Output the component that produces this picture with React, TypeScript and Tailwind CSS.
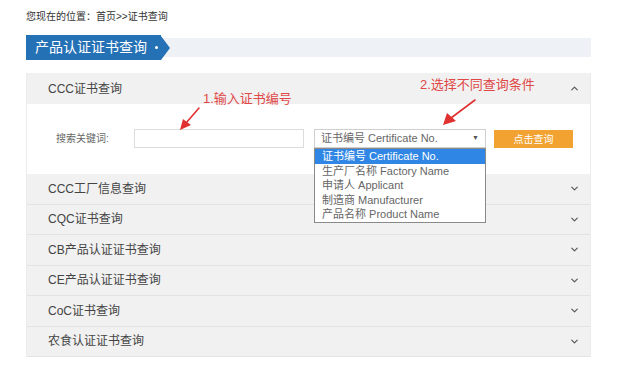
import { ChevronDown, ChevronUp } from 'lucide-react'

const rows = ['CCC工厂信息查询', 'CQC证书查询', 'CB产品认证证书查询', 'CE产品认证证书查询', 'CoC证书查询', '农食认证证书查询']

const options = ['生产厂名称 Factory Name', '申请人 Applicant', '制造商 Manufacturer', '产品名称 Product Name']

export default function App() {
  return (
    <div
      className="relative w-[639px] h-[372px] overflow-hidden bg-white"
      style={{ fontFamily: "'Liberation Sans', 'Noto Sans CJK SC', sans-serif" }}
    >
      {/* breadcrumb */}
      <div className="pl-[26px] pt-[10px] h-[35px] text-[10px] leading-[14px] text-[#333]">
        您现在的位置：首页&gt;&gt;证书查询
      </div>

      {/* title tab */}
      <div className="ml-[26px] w-[565px] h-[25px] flex items-center">
        <div className="relative z-10 h-[25px] w-[135px] bg-[#2571b5] flex items-center pl-[9px] text-[14px] text-white">
          产品认证证书查询
          <span className="absolute left-[129px] top-[11px] w-[3px] h-[3px] rounded-full bg-white" />
        </div>
        <div className="relative z-10 h-0 w-0 border-y-[12.5px] border-y-transparent border-l-[9px] border-l-[#2571b5]" />
        <div className="flex-1 h-[19px] -ml-[9px] bg-[#eef2f7]" />
      </div>

      {/* panel */}
      <div className="ml-[26px] mt-[13px] w-[565px] border-x border-[#ececec]">
        <div className="h-[31px] bg-[#f1f1f1] flex items-center justify-between pl-[21px] pr-[10px] text-[12px] text-[#444]">
          <span>CCC证书查询</span>
          <ChevronUp className="w-[11px] h-[11px] text-[#555]" strokeWidth={2.5} />
        </div>

        <div className="h-[70px] bg-white flex items-start pt-[25px] pl-[29px] text-[10px]">
          <span className="w-[78px] leading-[19px] text-[#666] text-[10px]">搜索关键词:</span>
          <div className="w-[170px] h-[19px] border border-[#dcdcdc] bg-white" />
          <div className="relative ml-[10px] w-[172px] h-[19px] border border-[#cfcfcf] flex items-center justify-between px-[6px] text-[11px] text-[#666]">
            <span>证书编号 Certificate No.</span>
            <span className="text-[7px] text-[#555]">▼</span>
            <div className="absolute left-[-1px] top-[18px] w-[172px] border border-[#8a8a8a] bg-white z-10 text-[11px] leading-[14.5px]">
              <div className="bg-[#2f86e4] text-white pl-[7px]">证书编号 Certificate No.</div>
              {options.map(o => (
                <div key={o} className="pl-[7px] text-[#666]">{o}</div>
              ))}
            </div>
          </div>
          <div className="ml-[8px] mt-[1px] w-[79px] h-[18px] bg-[#f2a230] flex items-center justify-center text-[10px] text-white">
            点击查询
          </div>
        </div>

        {rows.map(r => (
          <div key={r} className="h-[30.5px] bg-[#f1f1f1] border-b border-[#e3e3e3] flex items-center justify-between pl-[21px] pr-[10px] text-[12px] text-[#444]">
            <span>{r}</span>
            <ChevronDown className="w-[11px] h-[11px] text-[#555]" strokeWidth={2.5} />
          </div>
        ))}
      </div>

      {/* annotations */}
      <div className="absolute left-[203px] top-[89px] text-[13px] text-[#e04848]">1.输入证书编号</div>
      <div className="absolute left-[420px] top-[75px] text-[13px] text-[#e04848]">2.选择不同查询条件</div>
      <svg className="absolute left-0 top-0" width="639" height="372" viewBox="0 0 639 372">
        <line x1="199" y1="108" x2="186" y2="123" stroke="#e03030" strokeWidth="1.6" strokeLinecap="round" />
        <polygon points="180,130 183,119 191,125" fill="#e03030" />
        <line x1="475" y1="100" x2="451" y2="118" stroke="#e03030" strokeWidth="1.6" strokeLinecap="round" />
        <polygon points="443,125 447,113 456,121" fill="#e03030" />
      </svg>
    </div>
  )
}
